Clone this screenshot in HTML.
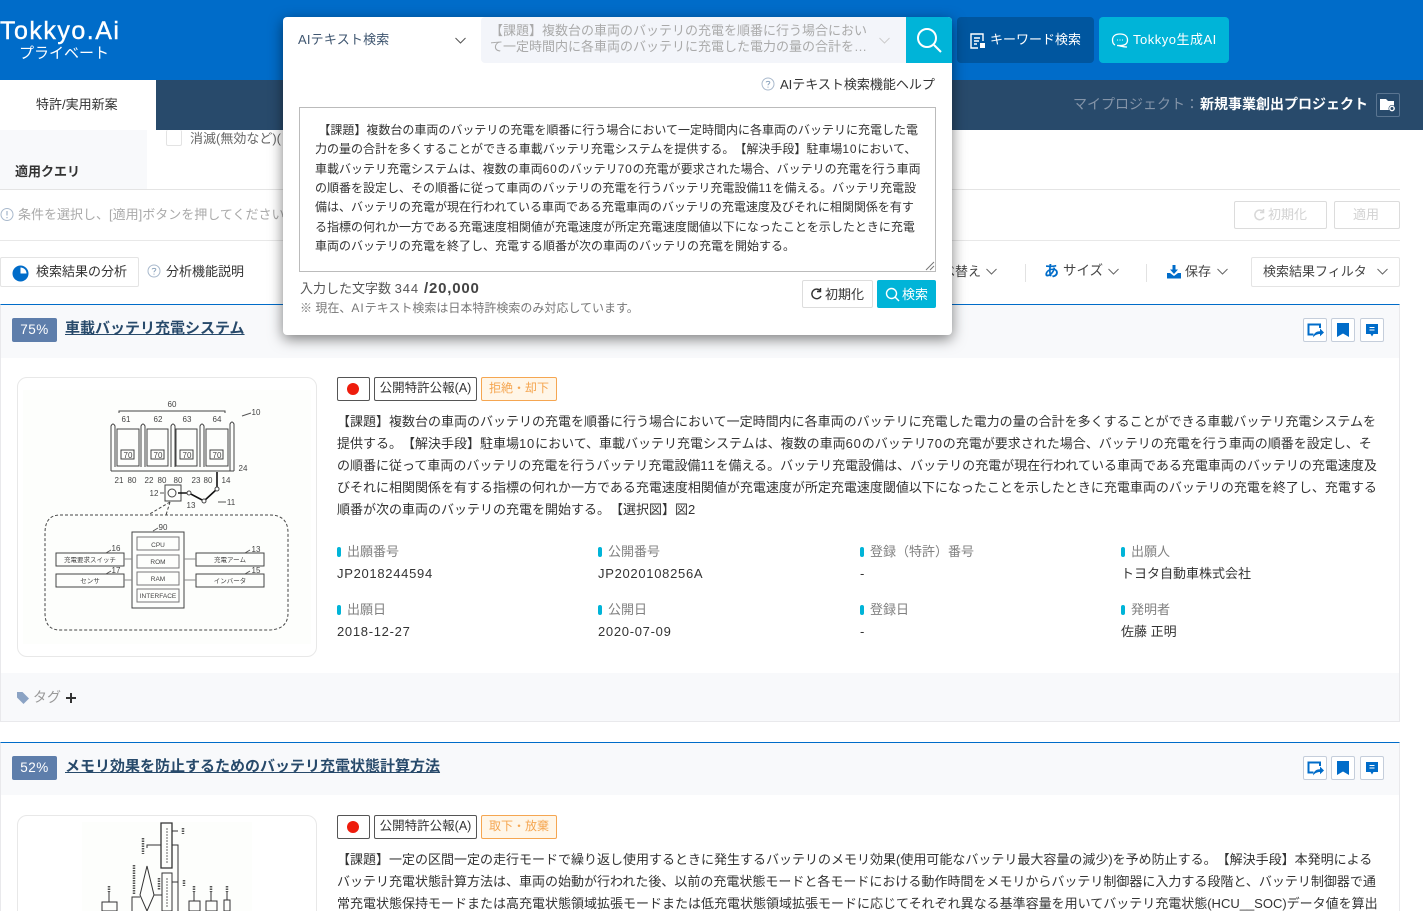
<!DOCTYPE html>
<html lang="ja"><head><meta charset="utf-8"><title>Tokkyo.Ai</title>
<style>
*{box-sizing:border-box;text-spacing-trim:space-all}
html,body{margin:0;padding:0;width:1423px;height:911px;overflow:hidden;background:#fff}
body{position:relative;font-family:"Liberation Sans","Noto Sans CJK JP",sans-serif;font-size:13px;color:#333}
.a{position:absolute;white-space:nowrap}
.t{position:absolute;white-space:nowrap;line-height:18px}
.lbl{position:absolute;white-space:nowrap;color:#808080;font-size:13px;line-height:18px;padding-left:10px}
.lbl:before{content:"";position:absolute;left:0;top:4px;width:4px;height:10px;border-radius:2px;background:#00b4d8}
.val{position:absolute;white-space:nowrap;color:#333;font-size:13px;line-height:18px;letter-spacing:.7px}
.abs{position:absolute;left:337px;white-space:nowrap;font-size:13px;line-height:22px;color:#333}
.ta{position:absolute;left:315px;white-space:nowrap;font-size:12px;line-height:19px;color:#333}
.n{letter-spacing:.8px}
.ib{position:absolute;width:24px;height:24px;border:1px solid #c5cedb;border-radius:2px;background:#fff}
.tag{position:absolute;height:24px;line-height:21px;border:1px solid #555;border-radius:2px;background:#fff;text-align:center;font-size:12.5px;color:#333}
.st{position:absolute;height:24px;line-height:21px;border:1px solid #f5a651;border-radius:2px;background:#fff6e8;text-align:center;font-size:12px;color:#f5a651}
svg{position:absolute;display:block}
</style></head><body>

<!-- header -->
<div class="a" style="left:0;top:0;width:1423px;height:80px;background:#006cc9"></div>
<div class="a" style="left:0;top:80px;width:1423px;height:50px;background:#284a6b"></div>
<div class="a" style="left:0;top:80px;width:156px;height:50px;background:#fff"></div>
<div class="a" style="left:0;top:17px;color:#fff;font-size:25px;line-height:28px;letter-spacing:1.5px;-webkit-text-stroke:.4px #fff">Tokkyo.Ai</div>
<div class="a" style="left:19px;top:45px;color:#fff;font-size:15px;line-height:18px;">プライベート</div>
<div class="t" style="left:36px;top:96px;font-size:13px;">特許/実用新案</div>

<!-- header buttons -->
<div class="a" style="left:957px;top:17px;width:137px;height:46px;background:#00569f;border-radius:4px"></div>
<svg style="left:969px;top:32px" width="18" height="18" viewBox="0 0 18 18" fill="none" stroke="#fff" stroke-width="1.4"><path d="M14 9V2H2v14h7M5 6h6M5 9h5M5 12h3"/><rect x="11" y="11" width="5" height="5" fill="#fff" stroke="none"/></svg>
<div class="t" style="left:990px;top:31px;color:#fff;font-size:13px;">キーワード検索</div>
<div class="a" style="left:1099px;top:17px;width:130px;height:46px;background:#00b4d8;border-radius:4px"></div>
<svg style="left:1111px;top:32px" width="18" height="16" viewBox="0 0 18 16" fill="none" stroke="#fff" stroke-width="1.3"><path d="M4 13C2 12 1.500 10 1.500 8 1.500 4 4.500 2 9 2s7.500 2 7.500 6-3 5.500-7 5.500H6c2 0 6 1.500 10 1.500"/><path d="M6 8h.8M8.600 8h.8M11.200 8h.8"/></svg>
<div class="t" style="left:1133px;top:31px;color:#fff;font-size:13px;letter-spacing:.5px">Tokkyo生成AI</div>

<div class="t" style="left:1073px;top:95px;font-size:14px;color:#8494a8;">マイプロジェクト：</div>
<div class="t" style="left:1200px;top:95px;font-size:14px;font-weight:700;color:#fff;">新規事業創出プロジェクト</div>
<div class="a" style="left:1376px;top:93px;width:24px;height:24px;border:1px solid #5a7591;border-radius:2px"></div>
<svg style="left:1379px;top:98px" width="18" height="15" viewBox="0 0 18 15"><path d="M1 1h6l2 2h6v9H1z" fill="#fff"/><circle cx="13" cy="10.500" r="3.500" fill="#284a6b"/><circle cx="13" cy="10.500" r="2.200" fill="none" stroke="#fff" stroke-width="1.400"/></svg>

<!-- filter area behind -->
<div class="a" style="left:0;top:130px;width:147px;height:59px;background:#f8f9fb"></div>
<div class="t" style="left:15px;top:163px;font-size:13px;font-weight:700;color:#333">適用クエリ</div>
<div class="a" style="left:166px;top:130px;width:16px;height:16px;border:1px solid #e3e3e3;border-radius:2px;border-top:none"></div>
<div class="t" style="left:190px;top:130px;color:#666;font-size:13px">消滅(無効など)(</div>
<div class="a" style="left:0;top:189px;width:1400px;height:1px;background:#e4e4e4"></div>
<svg style="left:0;top:207px" width="15" height="15" viewBox="0 0 15 15" fill="none" stroke="#a9b9cc" stroke-width="1"><circle cx="7" cy="7.500" r="6"/><path d="M7 4v4.500M7 10v1.200" stroke="#8fa6bf"/></svg>
<div class="t" style="left:18px;top:206px;color:#aaa;font-size:13px">条件を選択し、[適用]ボタンを押してください</div>
<div class="a" style="left:1234px;top:201px;width:93px;height:28px;border:1px solid #dcdcdc;border-radius:2px"></div>
<div class="t" style="left:1268px;top:206px;color:#d2d2d2;font-size:13px">初期化</div>
<svg style="left:1253px;top:208px" width="13" height="14" viewBox="0 0 13 14" fill="none" stroke="#d8d8d8" stroke-width="1.500"><path d="M10.500 4A4.800 4.800 0 1 0 11 9"/><path d="M10.500 1v3.500H7"/></svg>
<div class="a" style="left:1334px;top:201px;width:66px;height:28px;border:1px solid #dcdcdc;border-radius:2px"></div>
<div class="t" style="left:1353px;top:206px;color:#d2d2d2;font-size:13px">適用</div>
<div class="a" style="left:0;top:240px;width:1400px;height:1px;background:#e8e8e8"></div>

<!-- toolbar -->
<div class="a" style="left:0;top:257px;width:139px;height:30px;border:1px solid #e4e4e4;border-radius:2px"></div>
<svg style="left:12px;top:265px" width="17" height="17" viewBox="0 0 17 17"><circle cx="8.500" cy="8.500" r="8" fill="#006cc9"/><path d="M8.500 2.500A6 6 0 0 1 14.500 8.500H8.500z" fill="#fff"/></svg>
<div class="t" style="left:36px;top:263px;font-size:13px;color:#333">検索結果の分析</div>
<svg style="left:147px;top:264px" width="14" height="14" viewBox="0 0 14 14" fill="none" stroke="#a9b9cc"><circle cx="7" cy="7" r="6"/><path d="M5.200 5.400C5.200 4 8.800 4 8.800 5.500 8.800 6.700 7 6.700 7 8.300M7 9.600v1" stroke="#8fa6bf"/></svg>
<div class="t" style="left:166px;top:263px;font-size:13px;color:#333">分析機能説明</div>
<div class="t" style="left:929px;top:263px;font-size:13px;color:#444">並べ替え</div>
<svg style="left:986px;top:268px" width="11" height="8" viewBox="0 0 11 8" fill="none" stroke="#666"><path d="M.5 1l5 5 5-5"/></svg>
<div class="a" style="left:1025px;top:264px;width:1px;height:18px;background:#e2e2e2"></div>
<div class="t" style="left:1044px;top:263px;font-size:15px;font-weight:700;color:#006cc9">あ</div>
<div class="t" style="left:1063px;top:262px;font-size:13.500px;color:#444">サイズ</div>
<svg style="left:1108px;top:268px" width="11" height="8" viewBox="0 0 11 8" fill="none" stroke="#666"><path d="M.5 1l5 5 5-5"/></svg>
<div class="a" style="left:1146px;top:264px;width:1px;height:18px;background:#e2e2e2"></div>
<svg style="left:1167px;top:265px" width="15" height="14" viewBox="0 0 15 14" fill="#006cc9"><path d="M5.500 0h3v4.500h2.500L7 9 3 4.500h2.500z"/><path d="M0 8h3l4 3 4-3h3v5.500H0z"/></svg>
<div class="t" style="left:1185px;top:263px;font-size:13px;color:#444">保存</div>
<svg style="left:1217px;top:268px" width="11" height="8" viewBox="0 0 11 8" fill="none" stroke="#666"><path d="M.5 1l5 5 5-5"/></svg>
<div class="a" style="left:1251px;top:257px;width:149px;height:30px;border:1px solid #e4e4e4;border-radius:2px"></div>
<div class="t" style="left:1263px;top:263px;font-size:13px;color:#444">検索結果フィルタ</div>
<svg style="left:1377px;top:268px" width="11" height="8" viewBox="0 0 11 8" fill="none" stroke="#666"><path d="M.5 1l5 5 5-5"/></svg>

<!-- card 1 -->
<div class="a" style="left:0;top:304px;width:1400px;height:418px;border:1px solid #e9e9ec;border-top:1px solid #006cc9;background:#fff"></div>
<div class="a" style="left:1px;top:305px;width:1398px;height:53px;background:#f8f9fb"></div>
<div class="a" style="left:12px;top:318px;width:45px;height:24px;background:#5e7eab;border-radius:2px;color:#fff;text-align:center;line-height:24px;font-size:13.500px;letter-spacing:.5px">75%</div>
<div class="a" style="left:65px;top:319px;font-size:15px;line-height:20px;font-weight:700;color:#284a6b;text-decoration:underline">車載バッテリ充電システム</div>

<div class="ib" style="left:1303px;top:318px"></div>
<svg style="left:1307px;top:323px" width="17" height="15" viewBox="0 0 17 15"><path d="M6.500 11.500H1.500V1.500H13V5" fill="none" stroke="#006cc9" stroke-width="2"/><path d="M6 14.500c.5-4 3-6.200 7-6.200V5.500l4 4-4 3.800V11c-2.800 0-5 1-7 3.500z" fill="#006cc9"/></svg>
<div class="ib" style="left:1331px;top:318px"></div>
<svg style="left:1337px;top:323px" width="12" height="14" viewBox="0 0 12 14"><path d="M0 0h12v14L6 10.500 0 14z" fill="#006cc9"/></svg>
<div class="ib" style="left:1360px;top:318px"></div>
<svg style="left:1366px;top:324px" width="12" height="13" viewBox="0 0 12 13"><path d="M0 0h12v10H7.500L6 12.500 4.500 10H0z" fill="#006cc9"/><path d="M3.500 3.500h5M3.500 6h5" stroke="#fff" stroke-width="1"/></svg>

<div class="a" style="left:17px;top:377px;width:300px;height:280px;border:1px solid #e8e8e8;border-radius:10px"></div>
<div class="a" style="left:23px;top:390px;width:288px;height:254px;background:#fdfefc"></div>
<svg style="left:0;top:360px" width="330" height="300" viewBox="0 0 330 300" fill="none" stroke="#444" stroke-width="1">
<g font-family="Liberation Sans" font-size="8" fill="#444" stroke="none" text-anchor="middle">
<text x="172" y="47">60</text><text x="126" y="62">61</text><text x="158" y="62">62</text><text x="187" y="62">63</text><text x="217" y="62">64</text><text x="256" y="55">10</text>
<text x="119" y="123">21</text><text x="132" y="123">80</text><text x="149" y="123">22</text><text x="162" y="123">80</text><text x="178" y="123">80</text><text x="196" y="123">23</text><text x="208" y="123">80</text><text x="226" y="123">14</text><text x="243" y="111">24</text>
<text x="154" y="136">12</text><text x="191" y="148">13</text><text x="231" y="145">11</text>
<text x="163" y="170">90</text><text x="116" y="191">16</text><text x="116" y="213">17</text><text x="256" y="192">13</text><text x="256" y="213">15</text>
<text x="158" y="187" font-size="6.500">CPU</text><text x="158" y="204" font-size="6.500">ROM</text><text x="158" y="221" font-size="6.500">RAM</text><text x="158" y="238" font-size="6.500">INTERFACE</text>
<text x="90" y="202" font-size="6.500" font-family="Noto Sans CJK JP">充電要求スイッチ</text><text x="90" y="223" font-size="6.500" font-family="Noto Sans CJK JP">センサ</text><text x="230" y="202" font-size="6.500" font-family="Noto Sans CJK JP">充電アーム</text><text x="230" y="223" font-size="6.500" font-family="Noto Sans CJK JP">インバータ</text>
<text x="128" y="98">70</text><text x="158" y="98">70</text><text x="187" y="98">70</text><text x="217" y="98">70</text>
</g>
<path d="M119 53v-2h106v2"/>
<path d="M242 56l9-3M218 142h8M153 171l5-3M106 193l5-3M106 214l5-3M245 193l5-3M245 214l5-3M160 133h4" stroke="#555"/>
<path d="M111 111V66q2-4 4 0v41M141 107V66q2-4 4 0v41M171 107V66q2-4 4 0v41M200 107V66q2-4 4 0v41M230 111V64q2-4 4 0v47M111 111h123"/>
<path d="M117 69h22v37h-22zM147 69h21v37h-21zM176 69h21v37h-21zM206 69h22v37h-22z"/>
<path d="M121 90h13v9h-13zM151 90h13v9h-13zM180 90h13v9h-13zM210 90h13v9h-13z"/>
<rect x="165" y="125" width="16" height="16"/><circle cx="172" cy="133" r="4"/>
<path d="M178 133h11l15 8 13-12V112" stroke="#111" stroke-width="1.600"/>
<circle cx="189" cy="133" r="2" fill="#fff"/><circle cx="204" cy="141" r="2" fill="#fff"/><circle cx="217" cy="129" r="2" fill="#fff"/>
<path d="M170 142l-22 13M170 142l-4 13" stroke-dasharray="3 2"/>
<path d="M60 155h210q18 0 18 18v80q0 16-18 17H60q-15 0-15-17v-80q0-18 15-18z" stroke-dasharray="3 2"/>
<path d="M132 172h52v76h-52z"/>
<path d="M137 177h42v13h-42zM137 195h42v13h-42zM137 212h42v13h-42zM137 229h42v13h-42z" stroke="#777"/>
<path d="M56 193h68v13H56zM56 214h68v13H56zM196 193h68v13h-68zM196 214h68v13h-68z"/>
<path d="M124 199h8M124 220h8M184 199h12M184 220h12" stroke="#888"/>
</svg>

<div class="tag" style="left:337px;top:377px;width:33px"></div>
<div class="a" style="left:347px;top:383px;width:12px;height:12px;border-radius:50%;background:#ee1c0c"></div>
<div class="tag" style="left:374px;top:377px;width:103px">公開特許公報(A)</div>
<div class="st" style="left:481px;top:377px;width:76px">拒絶・却下</div>

<div class="abs" style="top:411px">【課題】複数台の車両のバッテリの充電を順番に行う場合において一定時間内に各車両のバッテリに充電した電力の量の合計を多くすることができる車載バッテリ充電システムを</div>
<div class="abs" style="top:433px">提供する。【解決手段】駐車場<span class="n">10</span>において、車載バッテリ充電システムは、複数の車両<span class="n">60</span>のバッテリ<span class="n">70</span>の充電が要求された場合、バッテリの充電を行う車両の順番を設定し、そ</div>
<div class="abs" style="top:455px">の順番に従って車両のバッテリの充電を行うバッテリ充電設備<span class="n">11</span>を備える。バッテリ充電設備は、バッテリの充電が現在行われている車両である充電車両のバッテリの充電速度及</div>
<div class="abs" style="top:477px">びそれに相関関係を有する指標の何れか一方である充電速度相関値が充電速度が所定充電速度閾値以下になったことを示したときに充電車両のバッテリの充電を終了し、充電する</div>
<div class="abs" style="top:499px">順番が次の車両のバッテリの充電を開始する。【選択図】図<span class="n">2</span></div>

<div class="lbl" style="left:337px;top:543px">出願番号</div><div class="val" style="left:337px;top:565px">JP2018244594</div>
<div class="lbl" style="left:598px;top:543px">公開番号</div><div class="val" style="left:598px;top:565px">JP2020108256A</div>
<div class="lbl" style="left:860px;top:543px">登録（特許）番号</div><div class="val" style="left:860px;top:565px">-</div>
<div class="lbl" style="left:1121px;top:543px">出願人</div><div class="val" style="left:1121px;top:565px;letter-spacing:0">トヨタ自動車株式会社</div>
<div class="lbl" style="left:337px;top:601px">出願日</div><div class="val" style="left:337px;top:623px">2018-12-27</div>
<div class="lbl" style="left:598px;top:601px">公開日</div><div class="val" style="left:598px;top:623px">2020-07-09</div>
<div class="lbl" style="left:860px;top:601px">登録日</div><div class="val" style="left:860px;top:623px">-</div>
<div class="lbl" style="left:1121px;top:601px">発明者</div><div class="val" style="left:1121px;top:623px;letter-spacing:0">佐藤 正明</div>

<div class="a" style="left:1px;top:673px;width:1398px;height:48px;background:#f8f9fb"></div>
<svg style="left:16px;top:691px" width="14" height="14" viewBox="0 0 14 14"><path d="M1 1h5.500L13 7.500 7.500 13 1 6.500z" fill="#8ba3c4"/></svg>
<div class="t" style="left:33px;top:688px;color:#999;font-size:14px">タグ</div>
<div class="a" style="left:66px;top:697px;width:10px;height:2px;background:#333"></div>
<div class="a" style="left:70px;top:693px;width:2px;height:10px;background:#333"></div>

<!-- card 2 -->
<div class="a" style="left:0;top:742px;width:1400px;height:180px;border-left:1px solid #e9e9ec;border-right:1px solid #e9e9ec;border-top:1px solid #006cc9;background:#fff"></div>
<div class="a" style="left:1px;top:743px;width:1398px;height:52px;background:#f8f9fb"></div>
<div class="a" style="left:12px;top:756px;width:45px;height:24px;background:#5e7eab;border-radius:2px;color:#fff;text-align:center;line-height:24px;font-size:13.500px;letter-spacing:.5px">52%</div>
<div class="a" style="left:65px;top:757px;font-size:15px;line-height:20px;font-weight:700;color:#284a6b;text-decoration:underline">メモリ効果を防止するためのバッテリ充電状態計算方法</div>

<div class="ib" style="left:1303px;top:756px"></div>
<svg style="left:1307px;top:761px" width="17" height="15" viewBox="0 0 17 15"><path d="M6.500 11.500H1.500V1.500H13V5" fill="none" stroke="#006cc9" stroke-width="2"/><path d="M6 14.500c.5-4 3-6.200 7-6.200V5.500l4 4-4 3.800V11c-2.800 0-5 1-7 3.500z" fill="#006cc9"/></svg>
<div class="ib" style="left:1331px;top:756px"></div>
<svg style="left:1337px;top:761px" width="12" height="14" viewBox="0 0 12 14"><path d="M0 0h12v14L6 10.500 0 14z" fill="#006cc9"/></svg>
<div class="ib" style="left:1360px;top:756px"></div>
<svg style="left:1366px;top:762px" width="12" height="13" viewBox="0 0 12 13"><path d="M0 0h12v10H7.500L6 12.500 4.500 10H0z" fill="#006cc9"/><path d="M3.500 3.500h5M3.500 6h5" stroke="#fff" stroke-width="1"/></svg>

<div class="a" style="left:17px;top:815px;width:300px;height:120px;border:1px solid #e8e8e8;border-radius:10px"></div>
<div class="a" style="left:82px;top:822px;width:170px;height:89px;background:#fdfefc"></div>
<svg style="left:60px;top:810px" width="200" height="101" viewBox="0 0 200 101" fill="none" stroke="#333" stroke-width="1">
<path d="M101 13h11v45h-11z" stroke-width="1.300"/><path d="M112 21h6M87 38v-3h14M112 35h6v66"/>
<path d="M102 63h10v38h-10zM112 72h6"/>
<path d="M87 56l-7 29 7 16 7-16zM94 85h8"/>
<path d="M42 92h15v9H42zM129 91h11v10h-11zM146 91h11v10h-11zM164 90h6v11h-6z"/>
<path d="M49 82v10M134 82v9M151 82v9M167 82v8M72 101V87h8"/>
<path d="M107 18v35M107 68v30" stroke="#666" stroke-dasharray="2 1"/>
<path d="M83 28v16M123 18v6M124 70v6M74 55v30M134 76v6M151 76v6M167 76v6M49 76v6M99 68v12" stroke="#555" stroke-width="2.500" stroke-dasharray="1.500 1"/>
</svg>

<div class="tag" style="left:337px;top:815px;width:33px"></div>
<div class="a" style="left:347px;top:821px;width:12px;height:12px;border-radius:50%;background:#ee1c0c"></div>
<div class="tag" style="left:374px;top:815px;width:103px">公開特許公報(A)</div>
<div class="st" style="left:481px;top:815px;width:76px">取下・放棄</div>

<div class="abs" style="top:849px">【課題】一定の区間一定の走行モードで繰り返し使用するときに発生するバッテリのメモリ効果(使用可能なバッテリ最大容量の減少)を予め防止する。【解決手段】本発明による</div>
<div class="abs" style="top:871px">バッテリ充電状態計算方法は、車両の始動が行われた後、以前の充電状態モードと各モードにおける動作時間をメモリからバッテリ制御器に入力する段階と、バッテリ制御器で通</div>
<div class="abs" style="top:893px">常充電状態保持モードまたは高充電状態領域拡張モードまたは低充電状態領域拡張モードに応じてそれぞれ異なる基準容量を用いてバッテリ充電状態(HCU__SOC)データ値を算出</div>

<!-- popup -->
<div class="a" style="left:283px;top:17px;width:669px;height:318px;background:#fff;border-radius:4px;box-shadow:0 4px 14px rgba(0,0,0,.5)"></div>
<div class="t" style="left:298px;top:31px;font-size:13px;color:#3f5670;letter-spacing:.2px">AIテキスト検索</div>
<svg style="left:455px;top:37px" width="11" height="8" viewBox="0 0 11 8" fill="none" stroke="#555"><path d="M.5 1l5 5 5-5"/></svg>
<div class="a" style="left:481px;top:17px;width:426px;height:46px;background:#f3f5fa;border-radius:4px 0 0 4px"></div>
<div class="t" style="left:490px;top:22px;font-size:13px;color:#aaa">【課題】複数台の車両のバッテリの充電を順番に行う場合におい</div>
<div class="t" style="left:490px;top:38px;font-size:13px;color:#aaa">て一定時間内に各車両のバッテリに充電した電力の量の合計を…</div>
<svg style="left:879px;top:37px" width="11" height="8" viewBox="0 0 11 8" fill="none" stroke="#ccc"><path d="M.5 1l5 5 5-5"/></svg>
<div class="a" style="left:906px;top:17px;width:46px;height:46px;background:#00b4d8;border-radius:0 4px 0 0"></div>
<svg style="left:916px;top:27px" width="26" height="26" viewBox="0 0 26 26" fill="none" stroke="#fff" stroke-width="2"><circle cx="11" cy="11" r="9"/><path d="M18 18l7 7"/></svg>
<svg style="left:761px;top:77px" width="14" height="14" viewBox="0 0 14 14" fill="none" stroke="#a9b9cc"><circle cx="7" cy="7" r="6"/><path d="M5.200 5.400C5.200 4 8.800 4 8.800 5.500 8.800 6.700 7 6.700 7 8.300M7 9.600v1" stroke="#8fa6bf"/></svg>
<div class="t" style="left:780px;top:76px;font-size:13px;color:#333">AIテキスト検索機能ヘルプ</div>

<div class="a" style="left:299px;top:107px;width:637px;height:165px;border:1px solid #bbb"></div>
<svg style="left:925px;top:261px" width="10" height="10" viewBox="0 0 10 10" stroke="#777"><path d="M9 1L1 9M9 5L5 9"/></svg>
<div class="ta" style="top:121px">&nbsp;【課題】複数台の車両のバッテリの充電を順番に行う場合において一定時間内に各車両のバッテリに充電した電</div>
<div class="ta" style="top:140px">力の量の合計を多くすることができる車載バッテリ充電システムを提供する。【解決手段】駐車場<span class="n">10</span>において、</div>
<div class="ta" style="top:160px">車載バッテリ充電システムは、複数の車両<span class="n">60</span>のバッテリ<span class="n">70</span>の充電が要求された場合、バッテリの充電を行う車両</div>
<div class="ta" style="top:179px">の順番を設定し、その順番に従って車両のバッテリの充電を行うバッテリ充電設備<span class="n">11</span>を備える。バッテリ充電設</div>
<div class="ta" style="top:198px">備は、バッテリの充電が現在行われている車両である充電車両のバッテリの充電速度及びそれに相関関係を有す</div>
<div class="ta" style="top:218px">る指標の何れか一方である充電速度相関値が充電速度が所定充電速度閾値以下になったことを示したときに充電</div>
<div class="ta" style="top:237px">車両のバッテリの充電を終了し、充電する順番が次の車両のバッテリの充電を開始する。</div>

<div class="t" style="left:300px;top:280px;font-size:13px;color:#555">入力した文字数 <span style="letter-spacing:.9px">344</span></div>
<div class="t" style="left:424px;top:280px;font-size:15px;font-weight:700;color:#444;letter-spacing:.8px">/20,000</div>
<div class="t" style="left:300px;top:299px;font-size:12px;color:#777">※ 現在、<span style="letter-spacing:1px">AI</span>テキスト検索は日本特許検索のみ対応しています。</div>
<div class="a" style="left:802px;top:280px;width:71px;height:28px;border:1px solid #ddd;border-radius:2px;background:#fff"></div>
<svg style="left:810px;top:287px" width="13" height="14" viewBox="0 0 13 14" fill="none" stroke="#333" stroke-width="1.400"><path d="M10.500 4A4.800 4.800 0 1 0 11 9"/><path d="M10.500 1v3.500H7"/></svg>
<div class="t" style="left:825px;top:286px;font-size:13px;color:#333">初期化</div>
<div class="a" style="left:877px;top:280px;width:59px;height:28px;border-radius:2px;background:#00b4d8"></div>
<svg style="left:885px;top:287px" width="15" height="15" viewBox="0 0 15 15" fill="none" stroke="#fff" stroke-width="1.400"><circle cx="6.500" cy="6.500" r="5"/><path d="M10 10l4 4"/></svg>
<div class="t" style="left:902px;top:286px;font-size:13px;color:#fff">検索</div>

</body></html>
